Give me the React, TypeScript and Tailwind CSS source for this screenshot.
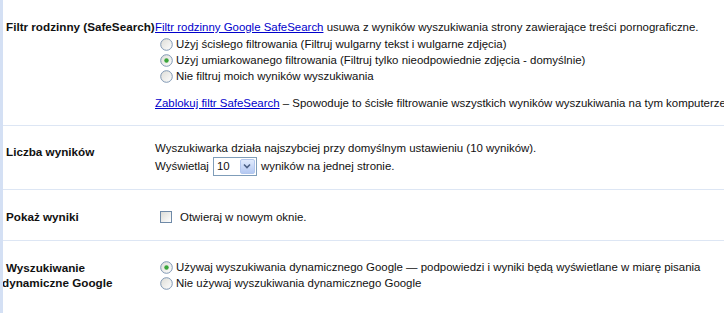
import React from "react";

function Radio({ checked }: { checked?: boolean }) {
  return (
    <svg width="13" height="13" viewBox="0 0 13 13" className="shrink-0">
      <defs>
        <linearGradient id={checked ? "rg1" : "rg0"} x1="0" y1="0" x2="1" y2="1">
          <stop offset="0" stopColor="#dcdcd6" />
          <stop offset="1" stopColor="#ffffff" />
        </linearGradient>
      </defs>
      <circle cx="6.5" cy="6.5" r="5.8" fill={`url(#${checked ? "rg1" : "rg0"})`} stroke="#7f97b3" strokeWidth="1" />
      {checked && <circle cx="6.5" cy="6.5" r="2.2" fill="#3aa53a" />}
    </svg>
  );
}

function Checkbox() {
  return (
    <span className="inline-block w-[12px] h-[12px] border border-[#6f8aa8] bg-gradient-to-br from-[#dcdcd7] to-white shrink-0" />
  );
}

export default function App() {
  return (
    <div className="w-[724px] h-[313px] bg-white border-l-[3px] border-[#d4e0f4] font-['Liberation_Sans',Arial,sans-serif] text-[11.45px] text-[#111] overflow-hidden leading-[16px]">
      {/* Row 1 */}
      <div className="flex border-b border-[#dde6f4] pt-[19px] pb-[14px]">
        <div className="w-[152px] pl-[3px] font-bold text-[11.7px] shrink-0 whitespace-nowrap">Filtr rodzinny (SafeSearch)</div>
        <div className="flex-1 whitespace-nowrap">
          <div>
            <a className="text-[#0000cc] underline">Filtr rodzinny Google SafeSearch</a> usuwa z wyników wyszukiwania strony zawierające treści pornograficzne.
          </div>
          <div className="flex items-center gap-[3px] pl-[5px] h-[16px] mt-[1px]">
            <Radio />
            <span>Użyj ścisłego filtrowania (Filtruj wulgarny tekst i wulgarne zdjęcia)</span>
          </div>
          <div className="flex items-center gap-[3px] pl-[5px] h-[16px]">
            <Radio checked />
            <span>Użyj umiarkowanego filtrowania (Filtruj tylko nieodpowiednie zdjęcia - domyślnie)</span>
          </div>
          <div className="flex items-center gap-[3px] pl-[5px] h-[16px]">
            <Radio />
            <span>Nie filtruj moich wyników wyszukiwania</span>
          </div>
          <div className="mt-[11px]">
            <a className="text-[#0000cc] underline">Zablokuj filtr SafeSearch</a> – Spowoduje to ścisłe filtrowanie wszystkich wyników wyszukiwania na tym komputerze.
          </div>
        </div>
      </div>

      {/* Row 2 */}
      <div className="flex border-b border-[#dde6f4] pb-[13px]">
        <div className="w-[152px] pl-[3px] pt-[18px] font-bold text-[11.7px] shrink-0">Liczba wyników</div>
        <div className="flex-1 pt-[14px] whitespace-nowrap">
          <div>Wyszukiwarka działa najszybciej przy domyślnym ustawieniu (10 wyników).</div>
          <div className="flex items-center h-[20px]">
            <span>Wyświetlaj</span>
            <span className="ml-[4px] mr-[4px] flex items-center w-[44px] h-[19px] border border-[#7f9db9] bg-white">
              <span className="flex-1 pl-[3px]">10</span>
              <span className="w-[15px] h-[15px] mr-[1px] rounded-[2px] bg-gradient-to-b from-[#e1ebfd] to-[#b5c9f2] border border-[#b3c7ee] flex items-center justify-center">
                <svg width="8" height="6" viewBox="0 0 8 6">
                  <path d="M1 1.5 L4 4.5 L7 1.5" fill="none" stroke="#4d6185" strokeWidth="1.6" />
                </svg>
              </span>
            </span>
            <span>wyników na jednej stronie.</span>
          </div>
        </div>
      </div>

      {/* Row 3 */}
      <div className="flex border-b border-[#dde6f4] pt-[19px] pb-[15px]">
        <div className="w-[152px] pl-[3px] font-bold text-[11.7px] shrink-0">Pokaż wyniki</div>
        <div className="flex-1 flex items-center h-[16px] pl-[5px]">
          <Checkbox />
          <span className="ml-[8px]">Otwieraj w nowym oknie.</span>
        </div>
      </div>

      {/* Row 4 */}
      <div className="flex">
        <div className="w-[152px] pt-[19px] font-bold text-[11.7px] shrink-0 leading-[15px]">
          <div className="pl-[3px]">Wyszukiwanie</div>
          <div className="-ml-[1px]">dynamiczne Google</div>
        </div>
        <div className="flex-1 pt-[18px] whitespace-nowrap">
          <div className="flex items-center gap-[3px] pl-[5px] h-[16px]">
            <Radio checked />
            <span>Używaj wyszukiwania dynamicznego Google — podpowiedzi i wyniki będą wyświetlane w miarę pisania</span>
          </div>
          <div className="flex items-center gap-[3px] pl-[5px] h-[16px]">
            <Radio />
            <span>Nie używaj wyszukiwania dynamicznego Google</span>
          </div>
        </div>
      </div>
    </div>
  );
}
